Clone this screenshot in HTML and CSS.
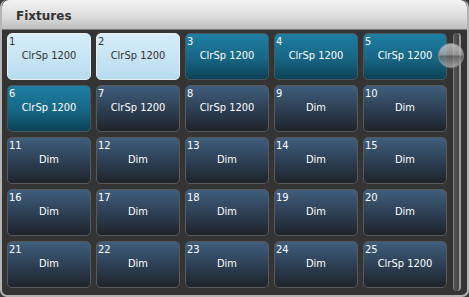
FILE: index.html
```html
<!DOCTYPE html>
<html lang="en">
<head>
    <meta charset="UTF-8">
    <title>Fixtures</title>
    <link rel="stylesheet" href="styles.css">
</head>
<body>

<div class="window">
    <div class="title">Fixtures</div>
    <div class="content">
        <div class="grid">
            <div class="fix sel"><span class="num">1</span><span class="name">ClrSp 1200</span></div>
            <div class="fix sel"><span class="num">2</span><span class="name">ClrSp 1200</span></div>
            <div class="fix blue"><span class="num">3</span><span class="name">ClrSp 1200</span></div>
            <div class="fix blue"><span class="num">4</span><span class="name">ClrSp 1200</span></div>
            <div class="fix blue"><span class="num">5</span><span class="name">ClrSp 1200</span></div>

            <div class="fix blue"><span class="num">6</span><span class="name">ClrSp 1200</span></div>
            <div class="fix"><span class="num">7</span><span class="name">ClrSp 1200</span></div>
            <div class="fix"><span class="num">8</span><span class="name">ClrSp 1200</span></div>
            <div class="fix"><span class="num">9</span><span class="name">Dim</span></div>
            <div class="fix"><span class="num">10</span><span class="name">Dim</span></div>

            <div class="fix"><span class="num">11</span><span class="name">Dim</span></div>
            <div class="fix"><span class="num">12</span><span class="name">Dim</span></div>
            <div class="fix"><span class="num">13</span><span class="name">Dim</span></div>
            <div class="fix"><span class="num">14</span><span class="name">Dim</span></div>
            <div class="fix"><span class="num">15</span><span class="name">Dim</span></div>

            <div class="fix"><span class="num">16</span><span class="name">Dim</span></div>
            <div class="fix"><span class="num">17</span><span class="name">Dim</span></div>
            <div class="fix"><span class="num">18</span><span class="name">Dim</span></div>
            <div class="fix"><span class="num">19</span><span class="name">Dim</span></div>
            <div class="fix"><span class="num">20</span><span class="name">Dim</span></div>

            <div class="fix"><span class="num">21</span><span class="name">Dim</span></div>
            <div class="fix"><span class="num">22</span><span class="name">Dim</span></div>
            <div class="fix"><span class="num">23</span><span class="name">Dim</span></div>
            <div class="fix"><span class="num">24</span><span class="name">Dim</span></div>
            <div class="fix"><span class="num">25</span><span class="name">ClrSp 1200</span></div>
        </div>
        <div class="scroll">
            <div class="track"></div>
            <div class="knob"></div>
        </div>
    </div>
</div>

</body>
</html>
```

FILE: styles.css
```css
body {
    margin: 0;
    background-color: #3a3a3a;
    font-family: Tahoma, "DejaVu Sans", "Liberation Sans", sans-serif;
}
.window {
    width: 469px;
    height: 297px;
    box-sizing: border-box;
    background-color: #343434;
    border: 2px solid #b4b4b4;
    border-top: none;
    border-radius: 7px;
    overflow: hidden;
}
.title {
    height: 30px;
    box-sizing: border-box;
    padding: 9px 0 0 14px;
    font-size: 12px;
    font-weight: bold;
    color: #333;
    background: linear-gradient(#f4f4f4, #dadada 60%, #bdbdbd);
    border-bottom: 1px solid #7a7a7a;
    border-radius: 7px 7px 0 0;
}
.content {
    display: flex;
    padding: 3px 0 0 5px;
}
.grid {
    display: grid;
    grid-template-columns: repeat(5, 84px);
    grid-auto-rows: 47px;
    gap: 5px;
}
.fix {
    position: relative;
    box-sizing: border-box;
    border: 1px solid #5a5a5a;
    border-radius: 5px;
    color: #fff;
    font-family: "DejaVu Sans Condensed", "DejaVu Sans", sans-serif;
    font-size: 11px;
    background: linear-gradient(#3f5e7e, #2c3d51 55%, #1f242b);
}
.fix.blue {
    background: linear-gradient(#1e7ea3, #176684 55%, #0c4257);
    border-color: #4a5860;
}
.fix.sel {
    color: #333;
    background: linear-gradient(#d7edf8, #c4e3f3 60%, #b7dcee);
    border-color: #e4eef3;
}
.num {
    position: absolute;
    left: 1px;
    top: 1px;
}
.name {
    display: block;
    text-align: center;
    padding-top: 15px;
}
.scroll {
    position: relative;
    flex: 1;
    height: 258px;
}
.track {
    position: absolute;
    left: 6px;
    top: 0;
    width: 8px;
    height: 100%;
    box-sizing: border-box;
    border-left: 1px solid #7d7d7d;
    border-right: 2px solid #9a9a9a;
    border-radius: 4px;
    background: linear-gradient(90deg, #555, #444);
}
.knob {
    position: absolute;
    left: -9px;
    top: 10px;
    width: 24px;
    height: 23px;
    border-radius: 50%;
    background: linear-gradient(#d8d8d8, #a9a9a9 48%, #6c6c6c 52%, #b5b5b5);
    opacity: 0.75;
    border: 1px solid #999;
}
```
